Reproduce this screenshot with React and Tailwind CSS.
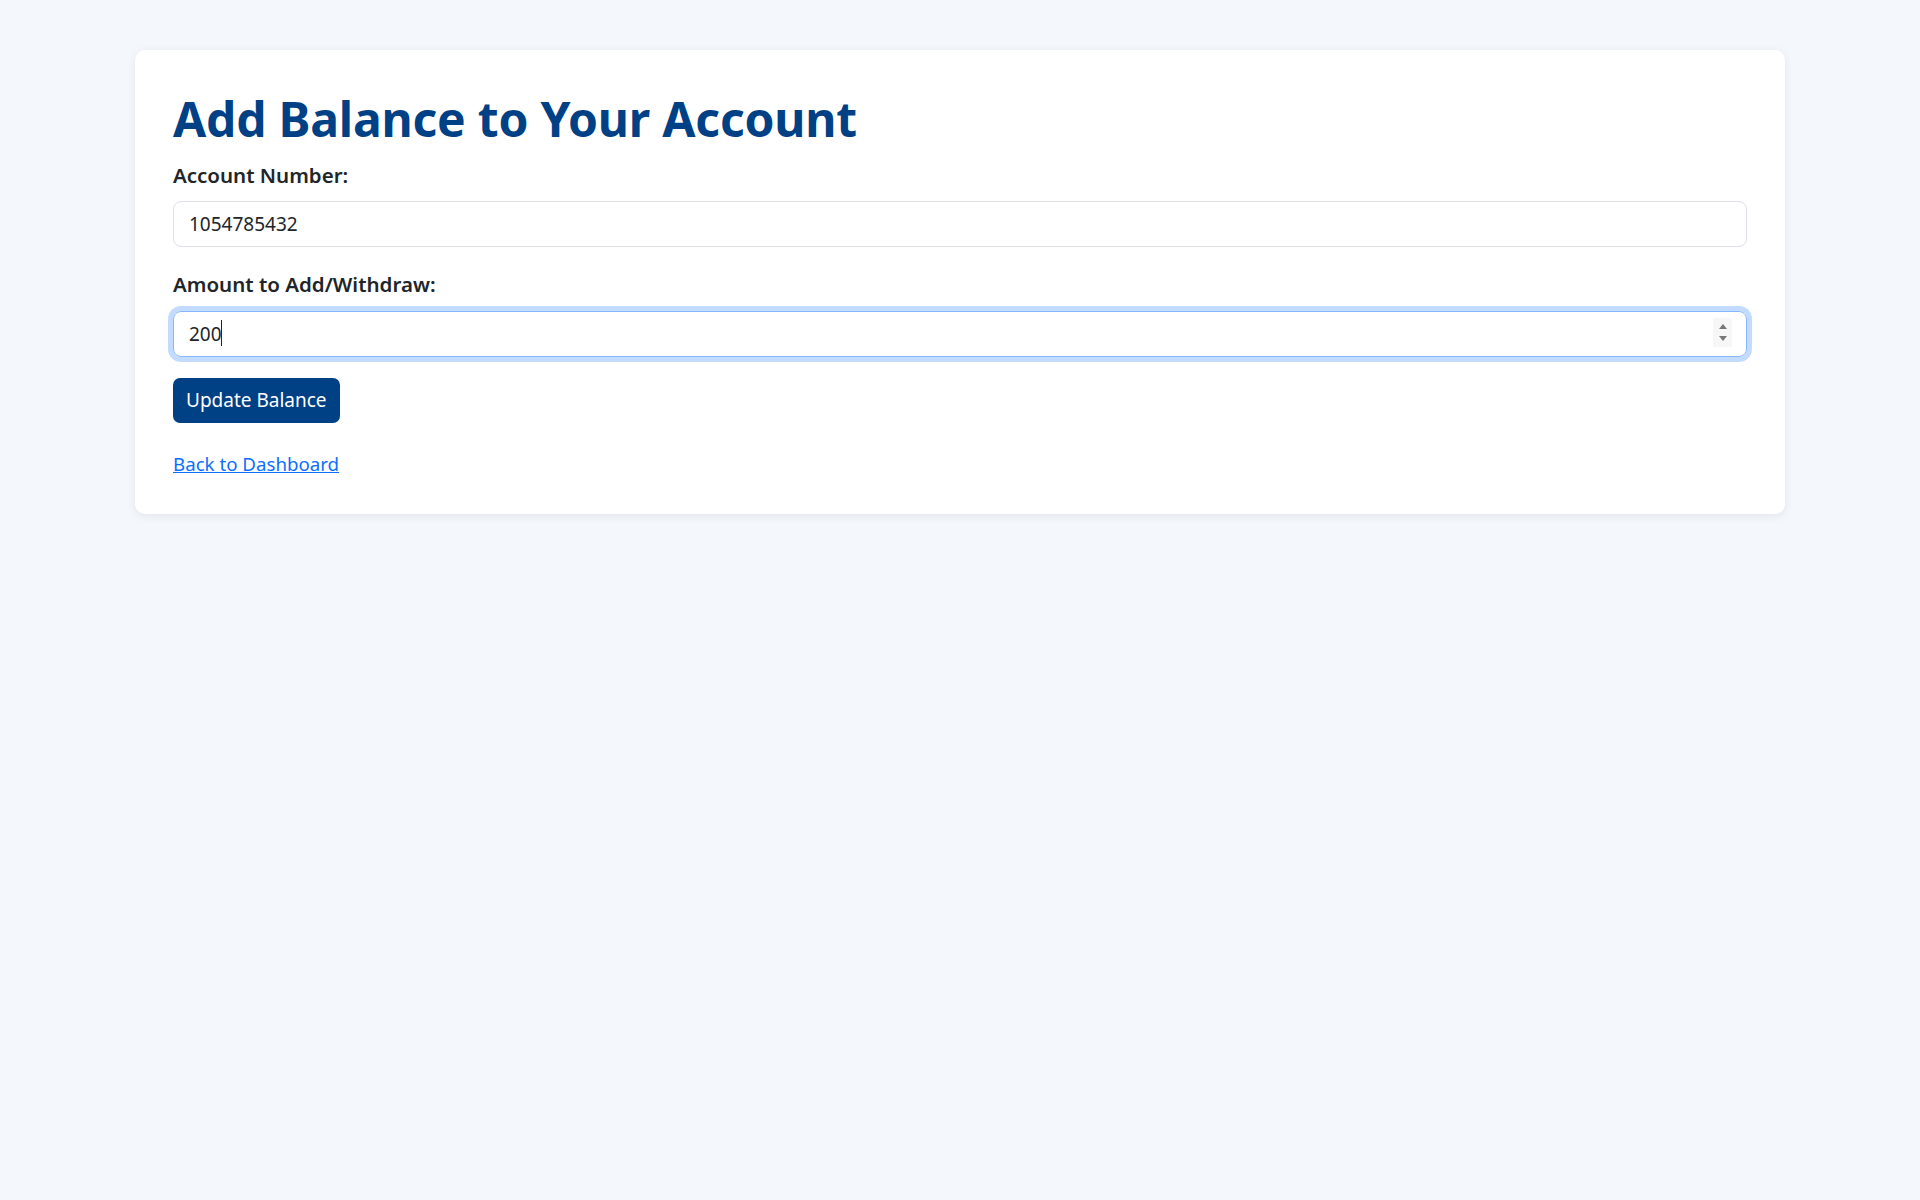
import { useState } from 'react';

export default function App() {
  const [account, setAccount] = useState('1054785432');
  const [amount, setAmount] = useState('200');

  return (
    <div className="min-h-screen bg-[#f4f7fb] pt-[50px] font-['Noto_Sans',sans-serif] text-[#212529]">
      <div className="mx-auto w-[1650px] rounded-[10px] bg-white px-[38px] pt-[37px] pb-[35px] shadow-[0_2px_10px_rgba(0,0,0,0.08)]">
        <h1 className="mt-[2px] mb-[11px] text-[48px] font-bold leading-[60px] tracking-[-0.2px] text-[#004085]">
          Add Balance to Your Account
        </h1>

        <form onSubmit={(e) => e.preventDefault()}>
          {/* Account number */}
          <label className="mb-[11px] block text-[20.5px] font-semibold leading-[30px]">Account Number:</label>
          <input
            type="text"
            value={account}
            onChange={(e) => setAccount(e.target.value)}
            className="block h-[46px] w-full rounded-[8px] border border-[#dee2e6] px-[15px] text-[19px] text-[#212529] outline-none"
          />

          {/* Amount */}
          <label className="mt-[22px] mb-[12px] block text-[20.5px] font-semibold leading-[30px]">Amount to Add/Withdraw:</label>
          <div className="relative">
            <input
              type="text"
              value={amount}
              onChange={(e) => setAmount(e.target.value)}
              className="block h-[46px] w-full rounded-[8px] border border-[#86b7fe] px-[15px] text-[19px] text-[#212529] shadow-[0_0_0_5px_rgba(13,110,253,0.25)] outline-none"
            />
            {/* caret */}
            <span className="absolute left-[48px] top-[9px] h-[26px] w-px bg-[#212529]" />
            {/* spinner */}
            <div className="absolute right-[15px] top-[7px] flex h-[29px] w-[19px] flex-col items-center justify-center gap-[7px] bg-[#f7f7f7]">
              <svg width="8" height="5" viewBox="0 0 8 5"><path d="M4 0 L8 5 L0 5 Z" fill="#777" /></svg>
              <svg width="8" height="5" viewBox="0 0 8 5"><path d="M0 0 L8 0 L4 5 Z" fill="#777" /></svg>
            </div>
          </div>

          <button
            type="submit"
            className="mt-[21px] block h-[45px] rounded-[7px] bg-[#004085] px-[13px] text-[19px] text-white"
          >
            Update Balance
          </button>
        </form>

        <a href="#" className="mt-[26px] inline-block text-[18.7px] leading-[30px] text-[#0d6efd] underline">
          Back to Dashboard
        </a>
      </div>
    </div>
  );
}
